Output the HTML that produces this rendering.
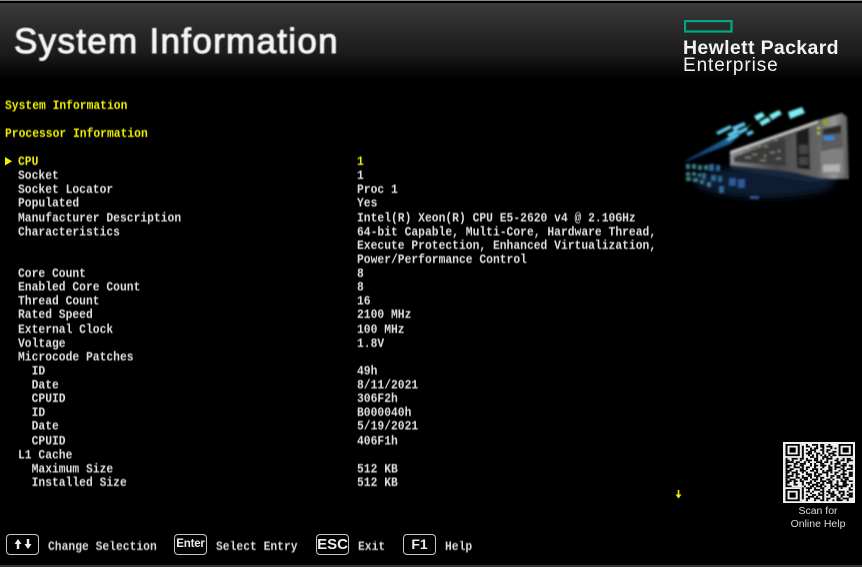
<!DOCTYPE html>
<html><head><meta charset="utf-8">
<style>
html,body{margin:0;padding:0;background:#000}
#p{position:relative;width:862px;height:567px;overflow:hidden;background:#000;font-family:"Liberation Mono",monospace}
#h{position:absolute;left:0;top:3px;width:862px;height:76px;background:linear-gradient(#3b3b3b,#2b2b2b 30%,#1c1c1c 65%,#000)}
#t1{position:absolute;left:0;top:0;width:862px;height:1px;background:#888}
#b1{position:absolute;left:0;top:565px;width:862px;height:2px;background:#333}
#title{position:absolute;left:14px;top:22px;font:400 35px/40px "Liberation Sans",sans-serif;color:#f4f4f4;white-space:nowrap;letter-spacing:1.3px;filter:blur(.4px);-webkit-text-stroke:1px #f4f4f4}
.hp{position:absolute;font-family:"Liberation Sans",sans-serif;white-space:nowrap;color:#f2f2f2;filter:blur(.3px)}
pre{position:absolute;margin:0;font:700 11.33px/12.13px "Liberation Mono",monospace;color:#e0e0e0;filter:blur(.35px);transform:scaleY(1.15);transform-origin:0 0}
.y{color:#f2f200}
.k{position:absolute;top:534px;width:31px;height:19px;border:1.5px solid #c8c8c8;border-radius:4px;color:#eee;text-align:center;font:700 14px/19px "Liberation Sans",sans-serif;filter:blur(.3px)}
.f{position:absolute;top:541px;font:700 11.33px/12px "Liberation Mono",monospace;color:#ddd;white-space:pre;filter:blur(.35px);transform:scaleY(1.15);transform-origin:0 0}
.q{position:absolute;left:778px;width:80px;text-align:center;font:400 10.5px/12px "Liberation Sans",sans-serif;color:#ddd}
</style></head><body><div id="p">
<div id="t1"></div><div id="h"></div><div id="b1"></div>
<div id="title">System Information</div>

<svg style="position:absolute;left:684px;top:20px" width="49" height="13"><rect x="1" y="1" width="46.5" height="10.5" fill="none" stroke="#01a982" stroke-width="2.2"/></svg>
<div class="hp" style="left:683px;top:38px;font-size:19.5px;line-height:20px;font-weight:700;letter-spacing:.35px">Hewlett Packard</div>
<div class="hp" style="left:683px;top:56px;font-size:19px;line-height:20px;letter-spacing:.9px">Enterprise</div>

<svg style="position:absolute;left:680px;top:100px" width="170" height="105" viewBox="0 0 170 105">
<defs>
<linearGradient id="a" x1="0" y1="1" x2="1" y2="0"><stop offset="0" stop-color="#0b3f8c"/><stop offset=".6" stop-color="#2a8fd0"/><stop offset="1" stop-color="#6fe2f0"/></linearGradient>
<linearGradient id="s" x1="0" y1="0" x2="1" y2="0"><stop offset="0" stop-color="#909090"/><stop offset=".5" stop-color="#4a4a4a"/><stop offset="1" stop-color="#666"/></linearGradient>
<linearGradient id="r" x1="0" y1="0" x2="1" y2="0"><stop offset="0" stop-color="#666"/><stop offset=".5" stop-color="#999"/><stop offset="1" stop-color="#555"/></linearGradient>
<filter id="bl"><feGaussianBlur stdDeviation="1"/></filter>
<filter id="bl2"><feGaussianBlur stdDeviation="4"/></filter>
</defs>
<ellipse cx="85" cy="82" rx="70" ry="16" fill="#0a1a30" filter="url(#bl2)"/>
<g filter="url(#bl)">
<path d="M6 60L50 36L72 24L50 44L30 52L6 62Z" fill="url(#a)" opacity=".7"/>
<g fill="#7eeef2">
<path d="M108 12l14-5 3 6-15 6z"/>
<path d="M74 16l8-4 3 4-8 5z M79 22l9-5 3 4-9 5z M89 15l10-5 3 4-10 6z"/>
</g>
<g fill="#5cc8ea"><path d="M52 27l12-5 2 3-12 6z M47 34l10-5 2 3-10 5z M58 31l8-4 2 3-8 4z M66 33l6-3 2 3-6 3z M36 32l14-7 2 3-14 7z M46 39l11-5 2 2-11 5z"/></g>
<g fill="#3c8290"><path d="M6 64h4v5h-4z M12 64h4v5h-4z M18 65h4v5h-4z M24 65h4v5h-4z M29 65h4v6h-4z"/><path d="M6 72h4v4h-4z M12 72h4v4h-4z M18 73h3v4h-3z M23 73h3v5h-3z"/><path d="M6 77h5v4h-5z M13 78h5v4h-5z M20 80h4v4h-4z M27 82h4v5h-4z"/></g>
<g fill="#2d6a9a"><path d="M29 64h5v7h-5z M36 65h4v6h-4z M22 73h4v6h-4z M31 75h5v6h-5z M38 76h4v6h-4z M39 86h5v7h-5z"/></g>
<g fill="#3266a8" opacity=".85"><path d="M49 78h7v8h-7z M58 79h7v9h-7z M70 96h9v3h-9z"/></g>
<path d="M50 52L138 21L139 78L112 72L50 65Z" fill="url(#s)"/>
<path d="M50 51L138 20L138 23L50 54Z" fill="#c4c4c4"/>
<path d="M54 57L105 38L106 66L54 62Z" fill="#3a3a3a"/>
<path d="M116 32L129 27L130 70L117 68Z" fill="#1c1c1c"/>
<path d="M119 45h9v9h-9z M119 57h9v8h-9z" fill="#454545"/>
<path d="M138 20L162 13L167 17L169 79L139 78Z" fill="url(#r)"/>
<path d="M141 29L162 24L163 48L141 51Z" fill="#5b5b5b"/>
<path d="M141 52L163 49L164 74L141 74Z" fill="#808080"/>
<path d="M143 65l17-1v8h-17z" fill="#c8c8c8" opacity=".7"/>
<path d="M143 29l18-4v8l-18 2z" fill="#2a2a2a"/>
<circle cx="146" cy="22" r="3.5" fill="#8aa03c"/>
<path d="M144 36h10v4h-10z" fill="#2a8ae0"/>
<circle cx="138.500" cy="28" r="1.4" fill="#b8c840"/><circle cx="138.500" cy="33" r="1.4" fill="#b8c840"/>
<path d="M50 65L112 72L139 78L168 79L130 82L50 69Z" fill="#16263d"/>
<g fill="#9ab060" opacity=".8"><path d="M78 45h2v2h-2z M95 39h2v2h-2z M60 52h2v2h-2z M98 50h2v2h-2z M84 55h2v2h-2z"/></g>
<g fill="#bbb" opacity=".7"><path d="M66 48h4v1h-4z M72 54h5v1h-5z M84 46h4v1h-4z M90 52h5v1h-5z M65 57h6v1h-6z M80 60h6v1h-6z M96 58h5v1h-5z"/></g>
</g>
</svg>

<pre style="left:5px;top:100px" class="y">System Information

Processor Information</pre>

<svg style="position:absolute;left:5px;top:157px" width="8" height="9"><path d="M0 0L7 4.200L0 8.500Z" fill="#f2f200"/></svg>

<pre style="left:18px;top:155.6px"><span class="y">CPU</span>
Socket
Socket Locator
Populated
Manufacturer Description
Characteristics


Core Count
Enabled Core Count
Thread Count
Rated Speed
External Clock
Voltage
Microcode Patches
  ID
  Date
  CPUID
  ID
  Date
  CPUID
L1 Cache
  Maximum Size
  Installed Size</pre>

<pre style="left:357px;top:155.6px"><span class="y">1</span>
1
Proc 1
Yes
Intel(R) Xeon(R) CPU E5-2620 v4 @ 2.10GHz
64-bit Capable, Multi-Core, Hardware Thread,
Execute Protection, Enhanced Virtualization,
Power/Performance Control
8
8
16
2100 MHz
100 MHz
1.8V

49h
8/11/2021
306F2h
B000040h
5/19/2021
406F1h

512 KB
512 KB</pre>

<svg style="position:absolute;left:675px;top:490px" width="7" height="9"><path d="M3.500 0v5" stroke="#f2f200" stroke-width="1.600"/><path d="M.5 4.500h6L3.500 8.500Z" fill="#f2f200"/></svg>

<svg style="position:absolute;left:783px;top:442px;filter:blur(.35px)" width="72" height="61" viewBox="0 0 72 61" preserveAspectRatio="none">
<rect width="72" height="61" fill="#f0f0f0"/>
<g transform="translate(2.5 2) scale(2.04 1.73)" fill="none" stroke="#000" stroke-width="1">
<path stroke-dasharray="8 2 1 2 3 1 2 2 1 3 8" d="M0 .5h33"/>
<path stroke-dasharray="9 1 2 3 1 1 2 1 3 2 1 1 7" d="M0 1.500h33"/>
<path stroke-dasharray="9 3 1 1 2 2 1 3 1 1 1 2 6" d="M0 2.500h33"/>
<path stroke-dasharray="9 1 1 1 3 2 2 1 2 3 1 1 6" d="M0 3.500h33"/>
<path stroke-dasharray="9 2 2 1 1 3 1 1 1 2 3 1 6" d="M0 4.500h33"/>
<path stroke-dasharray="9 1 3 2 2 1 1 2 3 1 1 1 6" d="M0 5.500h33"/>
<path stroke-dasharray="9 2 1 1 1 1 1 1 1 1 1 1 1 1 7" d="M0 6.500h33"/>
<path stroke-dasharray="9 3 2 1 1 2 3 1 1 3 7" d="M0 7.500h33"/>
<path stroke-dasharray="1 2 3 1 2 1 1 3 2 2 1 1 3 2 1 2 1 1 2 1" d="M0 8.500h33"/>
<path stroke-dasharray="2 1 1 3 1 2 3 1 2 1 1 2 1 3 2 1 2 1 3" d="M0 9.500h33"/>
<path stroke-dasharray="4 1 2 2 1 1 1 3 3 1 2 1 1 2 2 3 1 2" d="M0 10.500h33"/>
<path stroke-dasharray="1 3 2 1 3 2 1 1 1 2 2 3 1 1 3 1 2 3" d="M0 11.500h33"/>
<path stroke-dasharray="3 1 1 2 2 3 1 1 2 1 3 1 1 2 1 2 3 1 2" d="M0 12.500h33"/>
<path stroke-dasharray="2 2 3 1 1 1 2 2 1 3 1 2 2 1 3 1 1 3" d="M0 13.500h33"/>
<path stroke-dasharray="1 1 2 3 2 1 1 2 3 1 1 3 2 1 1 2 2 1 3 1" d="M0 14.500h33"/>
<path stroke-dasharray="3 2 1 1 3 2 2 1 1 2 1 1 3 3 1 1 2 3" d="M0 15.500h33"/>
<path stroke-dasharray="2 1 3 2 1 1 1 3 2 2 3 1 1 1 2 2 1 2 2" d="M0 16.500h33"/>
<path stroke-dasharray="1 2 1 1 2 3 3 1 1 1 2 2 1 3 1 2 3 1 2" d="M0 17.500h33"/>
<path stroke-dasharray="4 1 1 2 1 2 2 1 3 3 1 1 2 1 2 1 1 2 3" d="M0 18.500h33"/>
<path stroke-dasharray="2 3 2 1 3 1 1 2 1 1 2 3 1 2 2 1 3 2" d="M0 19.500h33"/>
<path stroke-dasharray="1 1 3 2 1 1 2 2 3 1 1 2 2 1 1 3 1 1 2 2" d="M0 20.500h33"/>
<path stroke-dasharray="3 1 2 1 2 3 1 1 1 2 3 1 2 2 1 1 3 1 2" d="M0 21.500h33"/>
<path stroke-dasharray="2 2 1 3 1 1 3 2 2 1 1 1 3 2 1 2 2 3" d="M0 22.500h33"/>
<path stroke-dasharray="1 3 2 2 1 2 1 1 3 1 2 3 1 1 2 2 3 1 1" d="M0 23.500h33"/>
<path stroke-dasharray="3 6 1 2 2 1 3 1 1 2 2 1 5 2 1" d="M0 24.500h33"/>
<path stroke-dasharray="9 1 3 1 1 2 2 3 1 1 2 1 1 3 1 1" d="M0 25.500h33"/>
<path stroke-dasharray="9 2 1 2 3 1 1 2 1 3 1 5 2" d="M0 26.500h33"/>
<path stroke-dasharray="9 1 2 1 1 3 2 1 2 1 1 2 3 1 1 2" d="M0 27.500h33"/>
<path stroke-dasharray="9 3 1 3 1 1 1 2 3 2 1 1 1 2 2" d="M0 28.500h33"/>
<path stroke-dasharray="9 1 1 2 2 1 3 1 1 1 3 2 2 1 3" d="M0 29.500h33"/>
<path stroke-dasharray="9 2 3 1 1 2 1 3 2 1 1 1 1 3 2" d="M0 30.500h33"/>
<path stroke-dasharray="9 1 2 2 3 1 1 1 2 3 2 1 3 2" d="M0 31.500h33"/>
<path stroke-dasharray="8 2 1 3 1 2 2 1 1 2 1 1 3 2 1 2" d="M0 32.500h33"/>
</g>
<g transform="translate(2.5 2) scale(2.04 1.73)">
<path fill="#000" d="M0 0h7v7H0z M26 0h7v7h-7z M0 26h7v7H0z"/>
<path fill="#f0f0f0" d="M1 1h5v5H1z M27 1h5v5h-5z M1 27h5v5H1z"/>
<path fill="#000" d="M2 2h3v3H2z M28 2h3v3h-3z M2 28h3v3H2z"/>
<path fill="#f0f0f0" d="M7 0h1v8H7z M0 7h8v1H0z M25 0h1v8h-1z M25 7h8v1h-8z M0 25h8v1H0z M7 25h1v8H7z"/>
</g>
</svg>
<div class="q" style="top:505px">Scan for</div>
<div class="q" style="top:518px">Online Help</div>

<div class="k" style="left:6px"><svg width="24" height="14" style="vertical-align:-2px"><path d="M7 2L3.500 7h2.300v5h2.400V7h2.300z M17 12l3.500-5h-2.300V2h-2.400v5h-2.300z" fill="#eee"/></svg></div>
<div class="f" style="left:48px">Change Selection</div>
<div class="k" style="left:174px;font-size:11.5px;letter-spacing:-.2px">Enter</div>
<div class="f" style="left:216px">Select Entry</div>
<div class="k" style="left:316px;font-size:15px">ESC</div>
<div class="f" style="left:358px">Exit</div>
<div class="k" style="left:403px">F1</div>
<div class="f" style="left:445px">Help</div>
</div></body></html>
